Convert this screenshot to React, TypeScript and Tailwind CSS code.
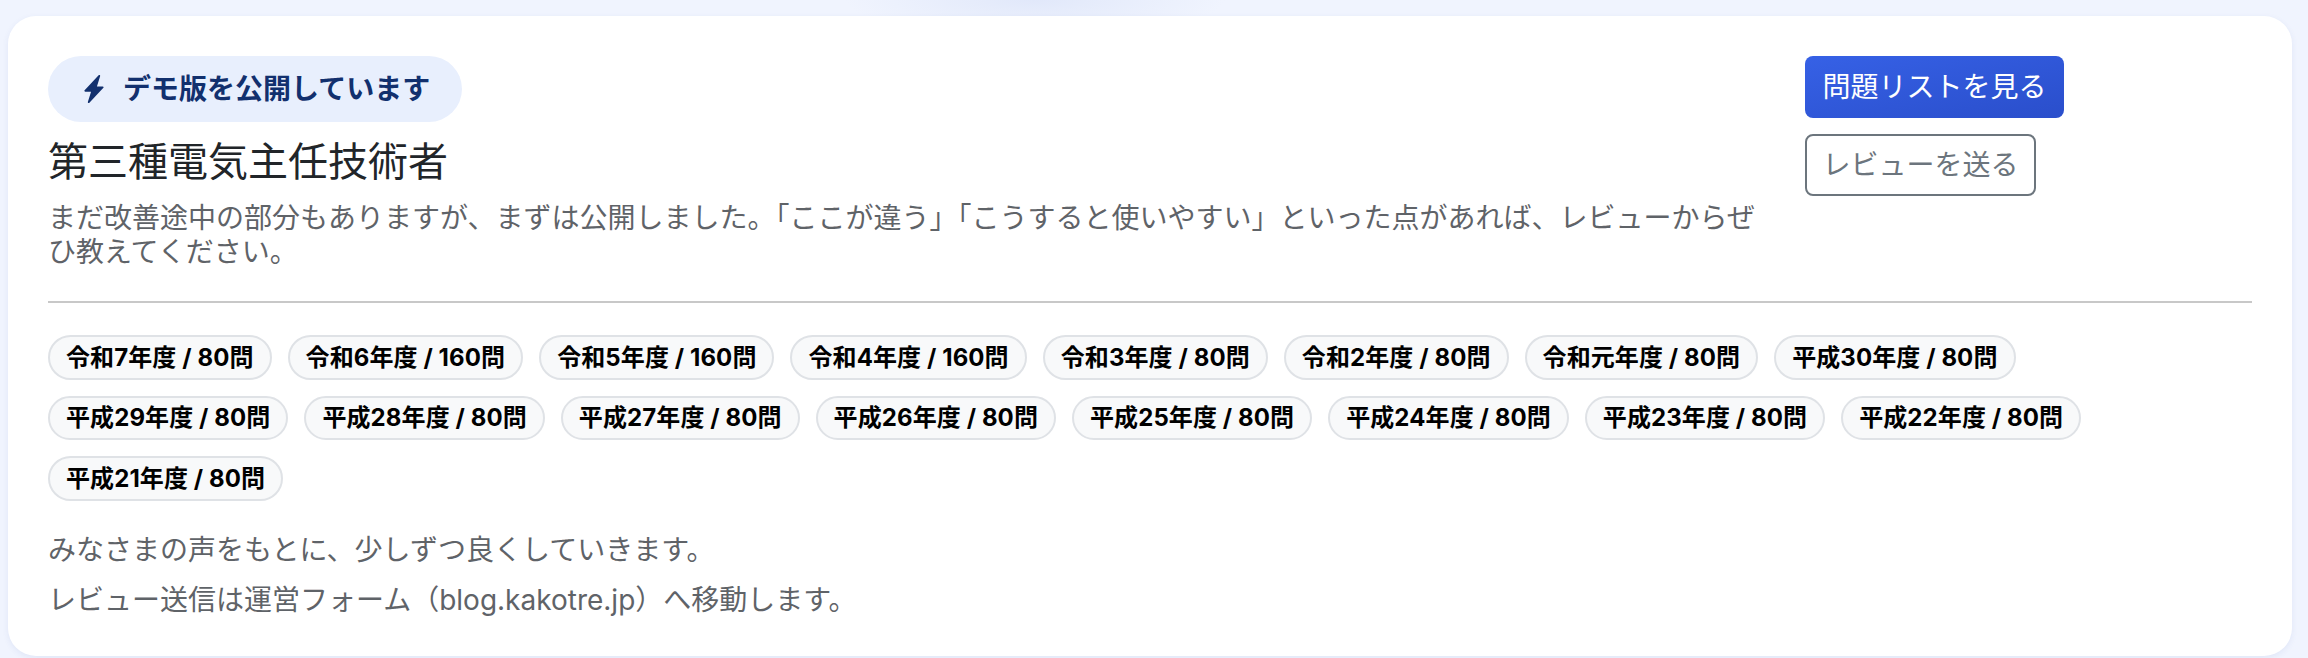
import { BsLightningChargeFill } from "react-icons/bs";

const years = [
  "令和7年度 / 80問",
  "令和6年度 / 160問",
  "令和5年度 / 160問",
  "令和4年度 / 160問",
  "令和3年度 / 80問",
  "令和2年度 / 80問",
  "令和元年度 / 80問",
  "平成30年度 / 80問",
  "平成29年度 / 80問",
  "平成28年度 / 80問",
  "平成27年度 / 80問",
  "平成26年度 / 80問",
  "平成25年度 / 80問",
  "平成24年度 / 80問",
  "平成23年度 / 80問",
  "平成22年度 / 80問",
  "平成21年度 / 80問",
];

const App = () => {
  return (
    <div className="min-h-[658px] bg-[#f0f4fe] bg-[radial-gradient(ellipse_190px_36px_at_1035px_0px,#e1e8fa,transparent)] pl-2 pr-4 pt-4 font-['Inter','Noto_Sans_CJK_JP',sans-serif]">
      <div className="h-[640px] rounded-[28px] bg-white p-10 shadow-[0_2px_6px_rgba(50,80,160,0.08)]">
        {/* Top row: intro + actions */}
        <div className="flex h-[247px] gap-12 border-b-2 border-[#c8c8c8]">
          <div className="w-[1709px]">
            <div className="inline-flex h-[66px] w-[414px] items-center gap-[15px] rounded-full bg-[#e8effd] px-8 text-[28px] font-bold whitespace-nowrap text-[#12306e]">
              <BsLightningChargeFill className="h-7 w-7 shrink-0" />
              デモ版を公開しています
            </div>
            <h2 className="mt-[10px] text-[40px] leading-[60px] font-normal text-[#212529]">第三種電気主任技術者</h2>
            <p className="mt-[9px] text-[28px] leading-[34px] text-[#5f6368]">
              まだ改善途中の部分もありますが、まずは公開しました。「ここが違う」「こうすると使いやすい」といった点があれば、レビューからぜひ教えてください。
            </p>
          </div>
          <div className="flex flex-col items-start gap-4">
            <button className="h-[62px] rounded-lg bg-gradient-to-br from-[#3661e6] to-[#2a4ecb] px-[17.5px] text-[28px] whitespace-nowrap text-white">
              問題リストを見る
            </button>
            <button className="h-[62px] rounded-lg border-2 border-[#6c757d] bg-white px-[15.5px] text-[28px] whitespace-nowrap text-[#6c757d]">
              レビューを送る
            </button>
          </div>
        </div>

        {/* Year chips */}
        <div className="mt-8 flex flex-wrap gap-4">
          {years.map((y) => (
            <span
              key={y}
              className="flex h-[44.5px] items-center rounded-full border-2 border-[#dfe2e6] bg-[#f8f9fa] px-4 pt-px text-[24px] font-bold tracking-[0.1px] text-black"
            >
              {y}
            </span>
          ))}
        </div>

        <p className="mt-6 text-[28px] leading-[50px] text-[#5f6368]">みなさまの声をもとに、少しずつ良くしていきます。</p>
        <p className="text-[28px] leading-[50px] text-[#5f6368]">レビュー送信は運営フォーム（blog.kakotre.jp）へ移動します。</p>
      </div>
    </div>
  );
};

export default App;
